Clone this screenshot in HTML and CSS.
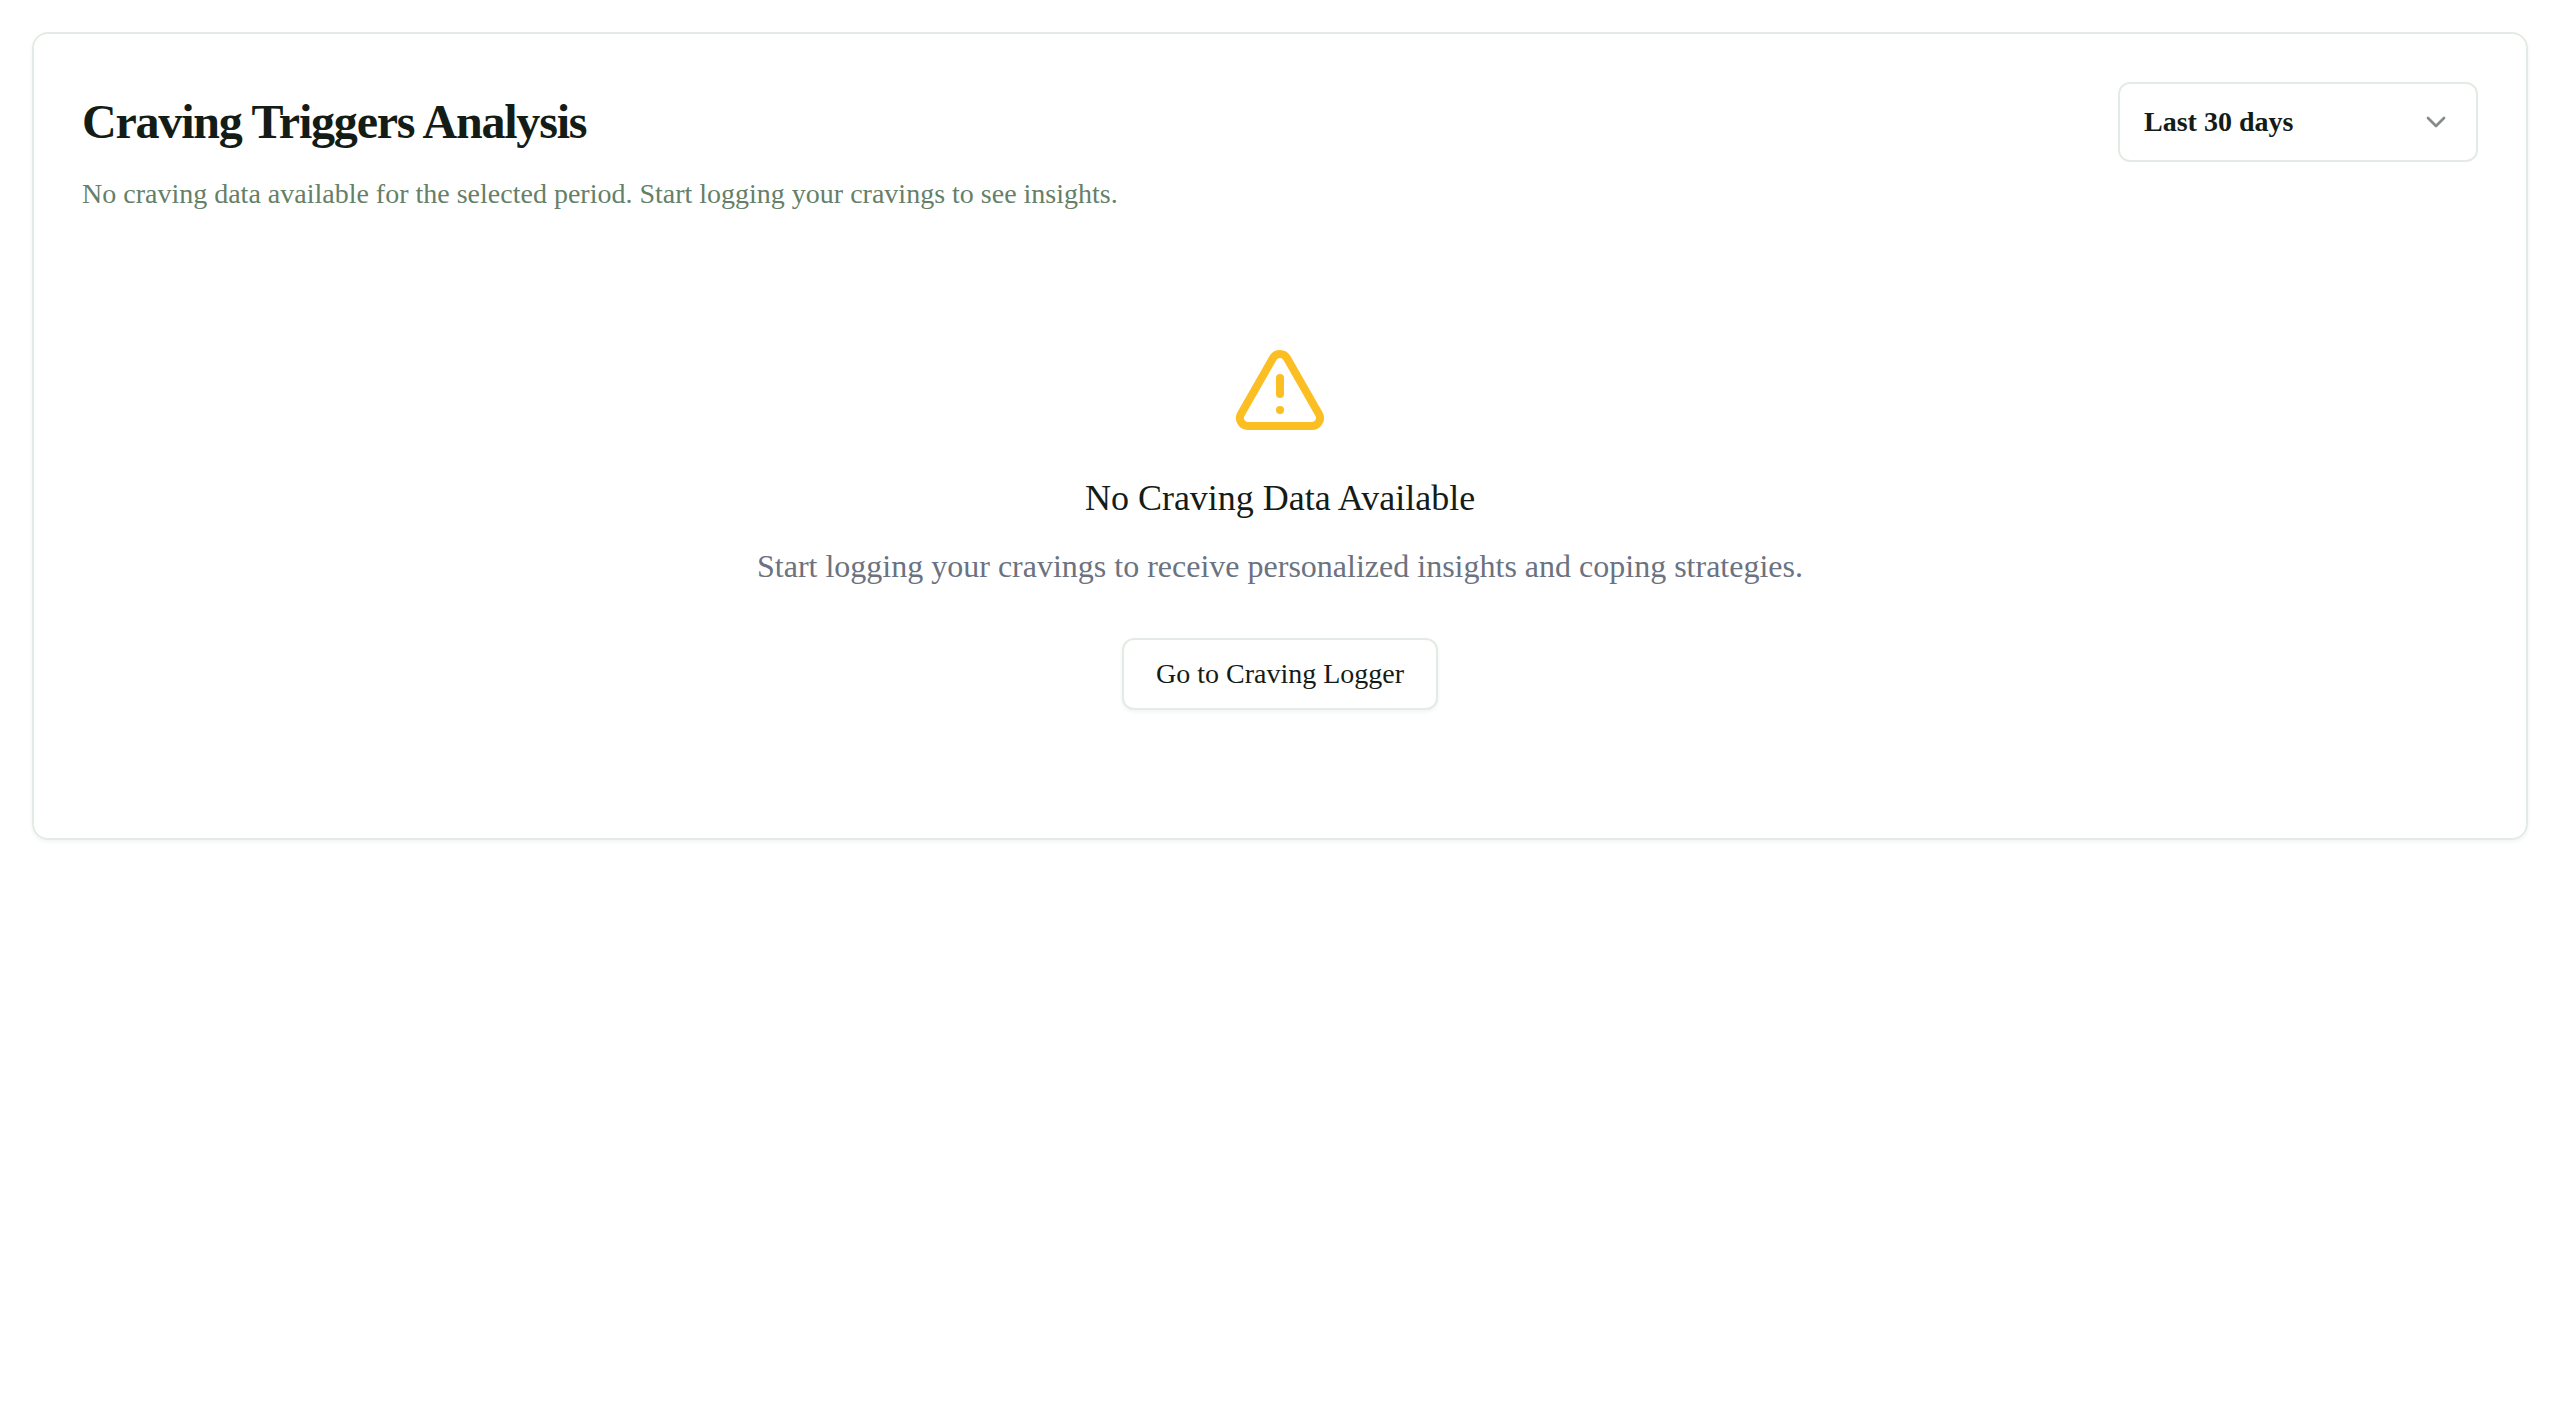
FILE: index.html
```html
<!DOCTYPE html>
<html lang="en">
<head>
<meta charset="utf-8">
<meta name="viewport" content="width=device-width, initial-scale=1">
<title>Craving Triggers Analysis</title>
<link rel="stylesheet" href="styles.css">
</head>
<body>
<main class="page">
  <section class="card">
    <header class="card-header">
      <div class="title-row">
        <h1 class="title">Craving Triggers Analysis</h1>
        <div class="select-wrap">
          <select class="select" aria-label="Time period">
            <option>Last 7 days</option>
            <option selected>Last 30 days</option>
            <option>Last 90 days</option>
          </select>
          <svg class="chevron" viewBox="0 0 24 24" aria-hidden="true"><path d="m6 9 6 6 6-6"/></svg>
        </div>
      </div>
      <p class="description">No craving data available for the selected period. Start logging your cravings to see insights.</p>
    </header>
    <div class="empty">
      <svg class="warning" viewBox="0 0 24 24" aria-hidden="true"><path d="m21.73 18-8-14a2 2 0 0 0-3.48 0l-8 14A2 2 0 0 0 4 21h16a2 2 0 0 0 1.73-3"/><path d="M12 9v4"/><path d="M12 17h.01"/></svg>
      <h2 class="empty-title">No Craving Data Available</h2>
      <p class="empty-text">Start logging your cravings to receive personalized insights and coping strategies.</p>
      <button class="button" type="button">Go to Craving Logger</button>
    </div>
  </section>
</main>
</body>
</html>
```
FILE: styles.css
```css
* {
  box-sizing: border-box;
  margin: 0;
}

body {
  background: #fff;
  color: #141c16;
  font-family: "Liberation Serif", "Times New Roman", serif;
}

.page {
  padding: 32px;
}

.card {
  border: 2px solid #e4ebe4;
  border-radius: 16px;
  box-shadow: 0 2px 4px rgba(0, 0, 0, 0.05);
}

.card-header {
  display: flex;
  flex-direction: column;
  gap: 12px;
  padding: 48px;
}

.title-row {
  display: flex;
  align-items: center;
  justify-content: space-between;
}

.title {
  font-size: 48px;
  line-height: 48px;
  font-weight: 700;
  letter-spacing: -0.025em;
}

.select-wrap {
  position: relative;
  width: 360px;
}

.select {
  appearance: none;
  display: block;
  width: 100%;
  height: 80px;
  padding: 0 24px;
  border: 2px solid #e4ebe4;
  border-radius: 12px;
  background: #fff;
  color: inherit;
  font: 700 28px/40px "Liberation Serif", "Times New Roman", serif;
}

.chevron {
  position: absolute;
  top: 24px;
  right: 26px;
  width: 32px;
  height: 32px;
  fill: none;
  stroke: currentColor;
  stroke-width: 2;
  stroke-linecap: round;
  stroke-linejoin: round;
  opacity: 0.5;
  pointer-events: none;
}

.description {
  color: #648068;
  font-size: 28px;
  line-height: 40px;
}

.empty {
  display: flex;
  flex-direction: column;
  align-items: center;
  padding: 80px 48px 128px;
}

.warning {
  width: 96px;
  height: 96px;
  fill: none;
  stroke: #fbbf24;
  stroke-width: 2;
  stroke-linecap: round;
  stroke-linejoin: round;
}

.empty-title {
  margin-top: 32px;
  font-size: 36px;
  line-height: 56px;
  font-weight: 400;
}

.empty-text {
  margin-top: 16px;
  color: #6b7280;
  font-size: 32px;
  line-height: 48px;
}

.button {
  height: 72px;
  margin-top: 48px;
  padding: 0 32px;
  border: 2px solid #e4ebe4;
  border-radius: 12px;
  background: #fff;
  box-shadow: 0 2px 4px rgba(0, 0, 0, 0.05);
  color: inherit;
  font: 400 28px/40px "Liberation Serif", "Times New Roman", serif;
}
```
